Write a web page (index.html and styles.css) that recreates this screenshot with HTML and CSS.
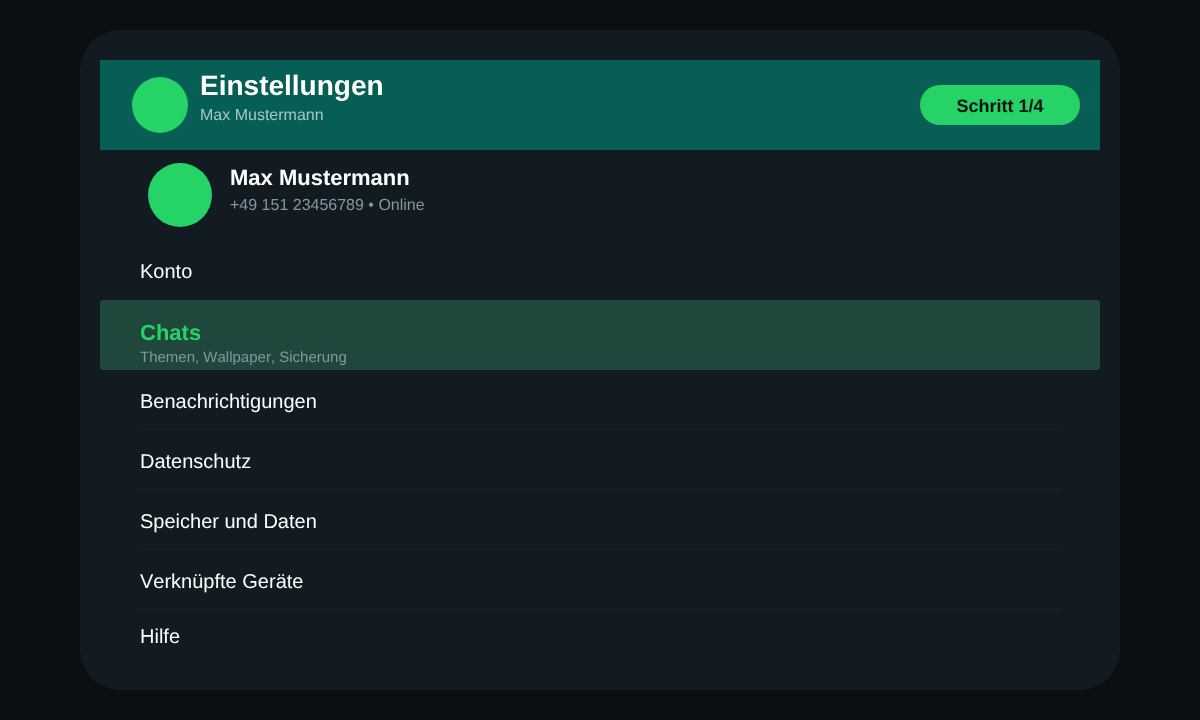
FILE: index.html
```html
<!DOCTYPE html>
<html lang="de">
<head>
<meta charset="utf-8">
<title>Einstellungen</title>
<link rel="stylesheet" href="styles.css">
</head>
<body>
<main class="card">
  <header class="topbar">
    <div class="topbar-avatar"></div>
    <div class="topbar-text">
      <h1 class="topbar-title">Einstellungen</h1>
      <p class="topbar-sub">Max Mustermann</p>
    </div>
    <div class="step">Schritt 1/4</div>
  </header>
  <section class="profile">
    <div class="profile-avatar"></div>
    <div class="profile-text">
      <div class="profile-name">Max Mustermann</div>
      <div class="profile-sub">+49 151 23456789 • Online</div>
    </div>
  </section>
  <nav class="menu">
    <div class="row row-first"><span class="label">Konto</span></div>
    <div class="row-active">
      <div class="active-label">Chats</div>
      <div class="active-sub">Themen, Wallpaper, Sicherung</div>
    </div>
    <div class="row"><span class="label">Benachrichtigungen</span></div>
    <div class="row"><span class="label">Datenschutz</span></div>
    <div class="row"><span class="label">Speicher und Daten</span></div>
    <div class="row"><span class="label">Verknüpfte Geräte</span></div>
    <div class="row row-last"><span class="label">Hilfe</span></div>
  </nav>
</main>
</body>
</html>
```
FILE: styles.css
```css
* { box-sizing: border-box; margin: 0; padding: 0; }
html, body { width: 1200px; height: 720px; overflow: hidden; }
body {
  background: #0a0f12;
  font-family: "Liberation Sans", Arial, sans-serif;
  text-rendering: geometricPrecision;
  font-kerning: none;
  color: #fff;
  padding: 30px 80px;
}
.card {
  width: 1040px;
  height: 660px;
  background: #111b21;
  border-radius: 40px;
  padding: 30px 20px;
  display: flex;
  flex-direction: column;
  will-change: transform;
}
.topbar {
  height: 90px;
  background: #075e54;
  display: flex;
  align-items: center;
  padding: 0 20px 0 32px;
  flex: none;
}
.topbar-avatar {
  width: 56px;
  height: 56px;
  border-radius: 50%;
  background: #25d366;
  flex: none;
  align-self: flex-start;
  margin-top: 17px;
}
.topbar-text { margin-left: 12px; flex: 1; align-self: flex-start; padding-top: 10px; }
.topbar-title { font-size: 28px; line-height: 32px; font-weight: 700; }
.topbar-sub { font-size: 16px; line-height: 18px; margin-top: 5px; color: #a4c9c3; }
.step {
  width: 160px;
  height: 40px;
  border-radius: 20px;
  background: #25d366;
  color: #0b1014;
  font-weight: 700;
  font-size: 18px;
  padding-top: 2px;
  display: flex;
  align-items: center;
  justify-content: center;
  flex: none;
}
.profile {
  height: 90px;
  padding-left: 48px;
  display: flex;
  align-items: flex-start;
  padding-top: 13px;
  flex: none;
}
.profile-avatar { width: 64px; height: 64px; border-radius: 50%; background: #25d366; flex: none; }
.profile-text { margin-left: 18px; padding-top: 2px; }
.profile-name { font-size: 22px; line-height: 26px; font-weight: 700; }
.profile-sub { font-size: 16px; line-height: 18px; margin-top: 6px; color: #8696a0; }
.menu { display: flex; flex-direction: column; flex: none; }
.row {
  height: 60px;
  margin: 0 40px;
  border-bottom: 1px solid #17252d;
  display: flex;
  align-items: flex-start;
  padding-top: 22px;
}
.row-first { border-bottom: 0; }
.row-last { height: 50px; border-bottom: 0; padding-top: 17px; }
.label { font-size: 20px; line-height: 20px; }
.row-active {
  height: 70px;
  background: #1f473c;
  border-radius: 4px;
  padding: 21px 40px 0;
  overflow: hidden;
}
.active-label { font-size: 22px; line-height: 24px; font-weight: 700; color: #25d366; }
.active-sub { font-size: 15px; line-height: 16px; margin-top: 5px; color: #8696a0; }
```
